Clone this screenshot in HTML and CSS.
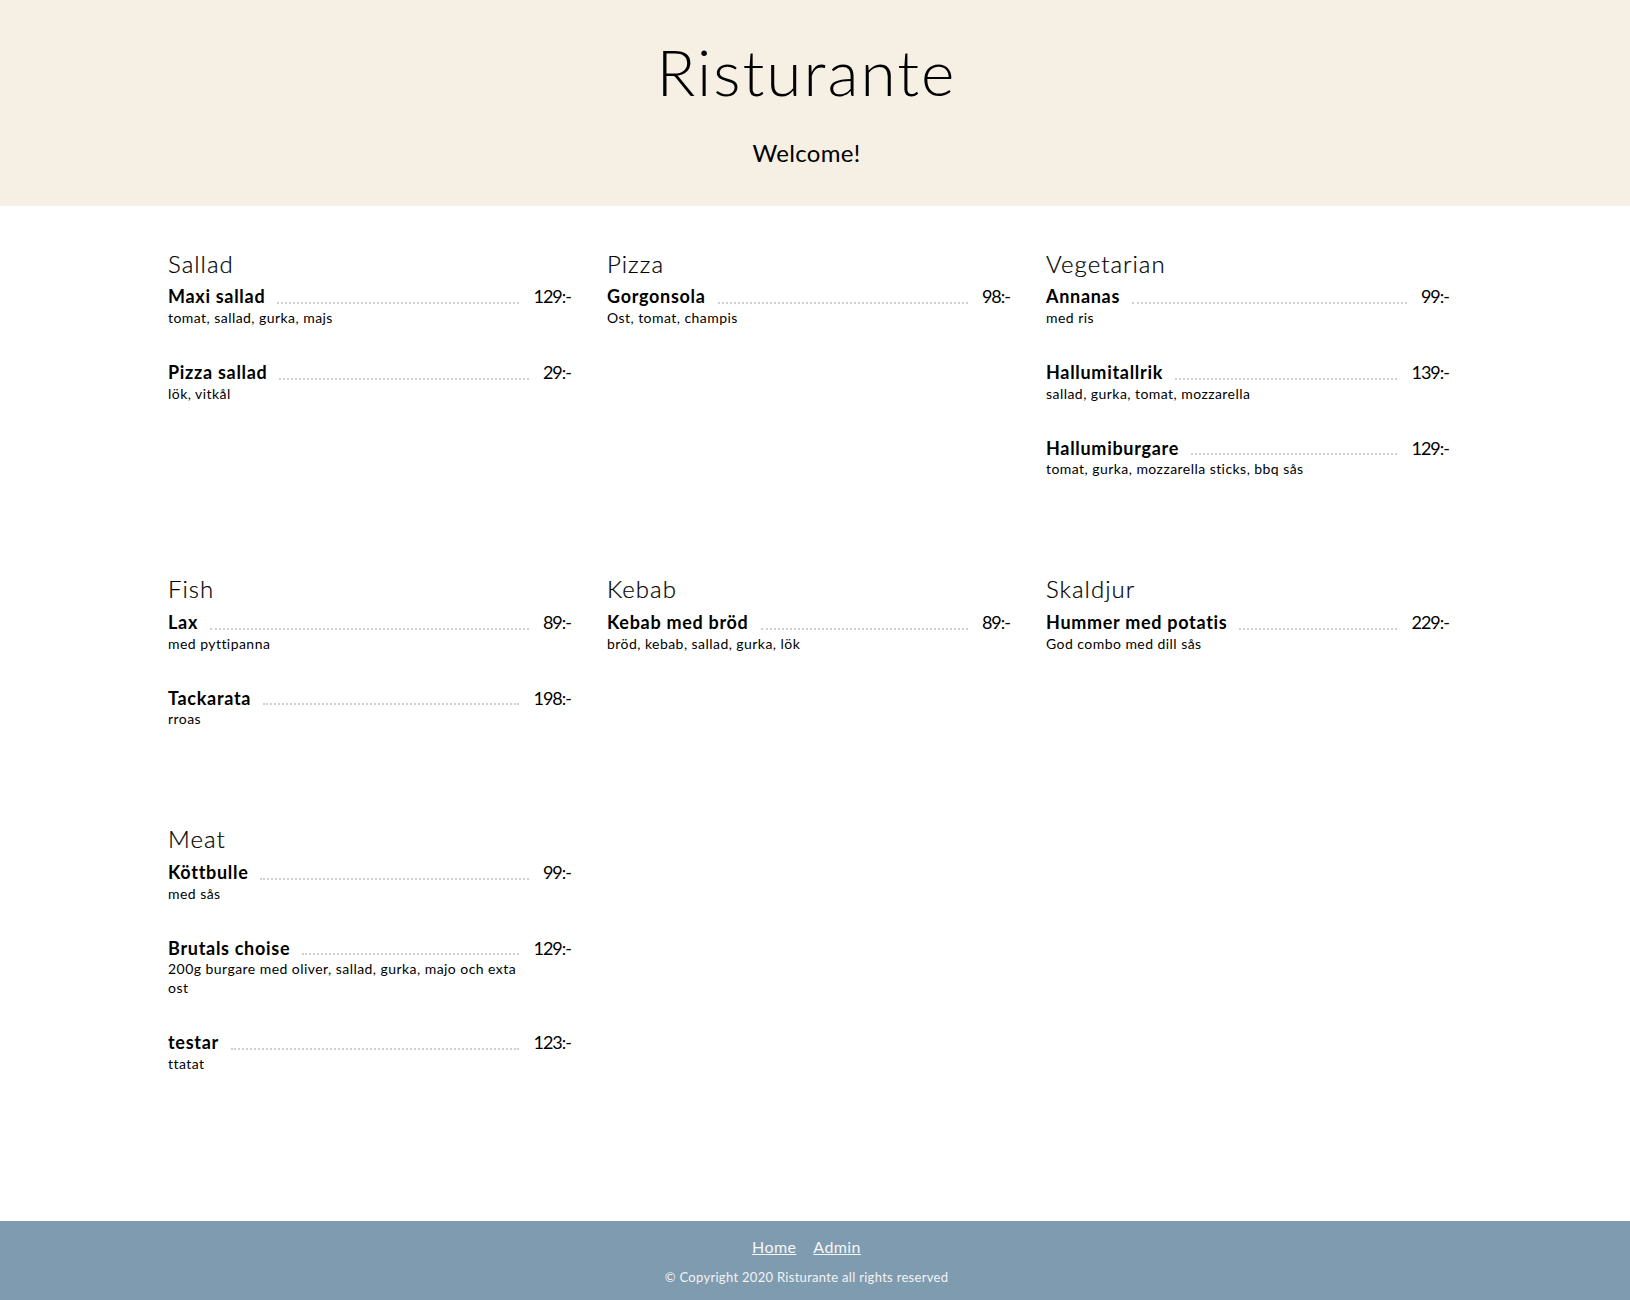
FILE: index.html
```html
<!DOCTYPE html>
<html lang="sv">
<head>
<meta charset="utf-8">
<title>Risturante</title>
<link rel="stylesheet" href="styles.css">
</head>
<body>
<header class="hero">
  <h1 class="hero-title">Risturante</h1>
  <p class="hero-sub">Welcome!</p>
</header>
<main class="menu">
  <section class="category">
    <h2 class="category-title">Sallad</h2>
    <div class="item"><div class="item-main"><div class="item-head"><span class="item-name">Maxi sallad</span><span class="leader"></span></div><p class="item-desc">tomat, sallad, gurka, majs</p></div><span class="item-price">129:-</span></div>
    <div class="item"><div class="item-main"><div class="item-head"><span class="item-name">Pizza sallad</span><span class="leader"></span></div><p class="item-desc">lök, vitkål</p></div><span class="item-price">29:-</span></div>
  </section>
  <section class="category">
    <h2 class="category-title">Pizza</h2>
    <div class="item"><div class="item-main"><div class="item-head"><span class="item-name">Gorgonsola</span><span class="leader"></span></div><p class="item-desc">Ost, tomat, champis</p></div><span class="item-price">98:-</span></div>
  </section>
  <section class="category">
    <h2 class="category-title">Vegetarian</h2>
    <div class="item"><div class="item-main"><div class="item-head"><span class="item-name">Annanas</span><span class="leader"></span></div><p class="item-desc">med ris</p></div><span class="item-price">99:-</span></div>
    <div class="item"><div class="item-main"><div class="item-head"><span class="item-name">Hallumitallrik</span><span class="leader"></span></div><p class="item-desc">sallad, gurka, tomat, mozzarella</p></div><span class="item-price">139:-</span></div>
    <div class="item"><div class="item-main"><div class="item-head"><span class="item-name">Hallumiburgare</span><span class="leader"></span></div><p class="item-desc">tomat, gurka, mozzarella sticks, bbq sås</p></div><span class="item-price">129:-</span></div>
  </section>
  <section class="category">
    <h2 class="category-title">Fish</h2>
    <div class="item"><div class="item-main"><div class="item-head"><span class="item-name">Lax</span><span class="leader"></span></div><p class="item-desc">med pyttipanna</p></div><span class="item-price">89:-</span></div>
    <div class="item"><div class="item-main"><div class="item-head"><span class="item-name">Tackarata</span><span class="leader"></span></div><p class="item-desc">rroas</p></div><span class="item-price">198:-</span></div>
  </section>
  <section class="category">
    <h2 class="category-title">Kebab</h2>
    <div class="item"><div class="item-main"><div class="item-head"><span class="item-name">Kebab med bröd</span><span class="leader"></span></div><p class="item-desc">bröd, kebab, sallad, gurka, lök</p></div><span class="item-price">89:-</span></div>
  </section>
  <section class="category">
    <h2 class="category-title">Skaldjur</h2>
    <div class="item"><div class="item-main"><div class="item-head"><span class="item-name">Hummer med potatis</span><span class="leader"></span></div><p class="item-desc">God combo med dill sås</p></div><span class="item-price">229:-</span></div>
  </section>
  <section class="category">
    <h2 class="category-title">Meat</h2>
    <div class="item"><div class="item-main"><div class="item-head"><span class="item-name">Köttbulle</span><span class="leader"></span></div><p class="item-desc">med sås</p></div><span class="item-price">99:-</span></div>
    <div class="item"><div class="item-main"><div class="item-head"><span class="item-name">Brutals choise</span><span class="leader"></span></div><p class="item-desc">200g burgare med oliver, sallad, gurka, majo och exta ost</p></div><span class="item-price">129:-</span></div>
    <div class="item"><div class="item-main"><div class="item-head"><span class="item-name">testar</span><span class="leader"></span></div><p class="item-desc">ttatat</p></div><span class="item-price">123:-</span></div>
  </section>
</main>
<footer class="site-footer">
  <nav class="footer-nav"><a href="#">Home</a><a href="#">Admin</a></nav>
  <p class="copyright">© Copyright 2020 Risturante all rights reserved</p>
</footer>
</body>
</html>
```

FILE: styles.css
```css
* { box-sizing: border-box; }

html, body { height: 100%; }

body {
  margin: 0;
  min-height: 100vh;
  display: flex;
  flex-direction: column;
  font-family: Lato, "Open Sans", sans-serif;
  color: #000;
  background: #fff;
}

.hero {
  background: #f6efe3;
  text-align: center;
  padding: 34px 17px 38px 0;
}

.hero-title {
  margin: 0;
  font-size: 64px;
  font-weight: 300;
  line-height: 1.2;
  letter-spacing: 2px;
}

.hero-sub {
  margin: 28px 0 0;
  font-size: 24px;
  font-weight: 400;
  line-height: 1.2;
  letter-spacing: 0.3px;
}

.menu {
  flex: 1;
  display: grid;
  grid-template-columns: repeat(3, 1fr);
  column-gap: 36px;
  row-gap: 62px;
  align-content: start;
  padding: 44px 181px 0 168px;
}

.category-title {
  margin: 0 0 8px;
  font-size: 24px;
  font-weight: 300;
  line-height: 1.2;
  letter-spacing: 1px;
  -webkit-text-stroke: 0.2px #000;
}

.item {
  display: flex;
  align-items: flex-start;
  margin-bottom: 35px;
}

.item-main {
  flex: 1;
  min-width: 0;
}

.item-head {
  display: flex;
  align-items: flex-end;
}

.item-name {
  font-size: 18px;
  font-weight: 700;
  line-height: 1.2;
  letter-spacing: 0.7px;
}

.leader {
  flex: 1;
  margin: 0 0 4px 12px;
  border-bottom: 2px dotted #d0d0d0;
}

.item-price {
  margin-left: 14px;
  font-size: 18px;
  line-height: 1.2;
  letter-spacing: -1px;
}

.item-desc {
  margin: 0;
  font-size: 14px;
  line-height: 19px;
  letter-spacing: 0.45px;
}

.site-footer {
  background: #7f9bb0;
  color: #f3f3f3;
  text-align: center;
  padding: 16px 17px 14px 0;
}

.footer-nav {
  display: flex;
  justify-content: center;
  gap: 17px;
  font-size: 16px;
  line-height: 1.2;
  letter-spacing: 0.4px;
}

.footer-nav a {
  color: #f7f7f7;
  text-decoration: underline;
}

.copyright {
  margin: 14px 0 0;
  font-size: 13px;
  line-height: 1.2;
  letter-spacing: 0.3px;
}
```
